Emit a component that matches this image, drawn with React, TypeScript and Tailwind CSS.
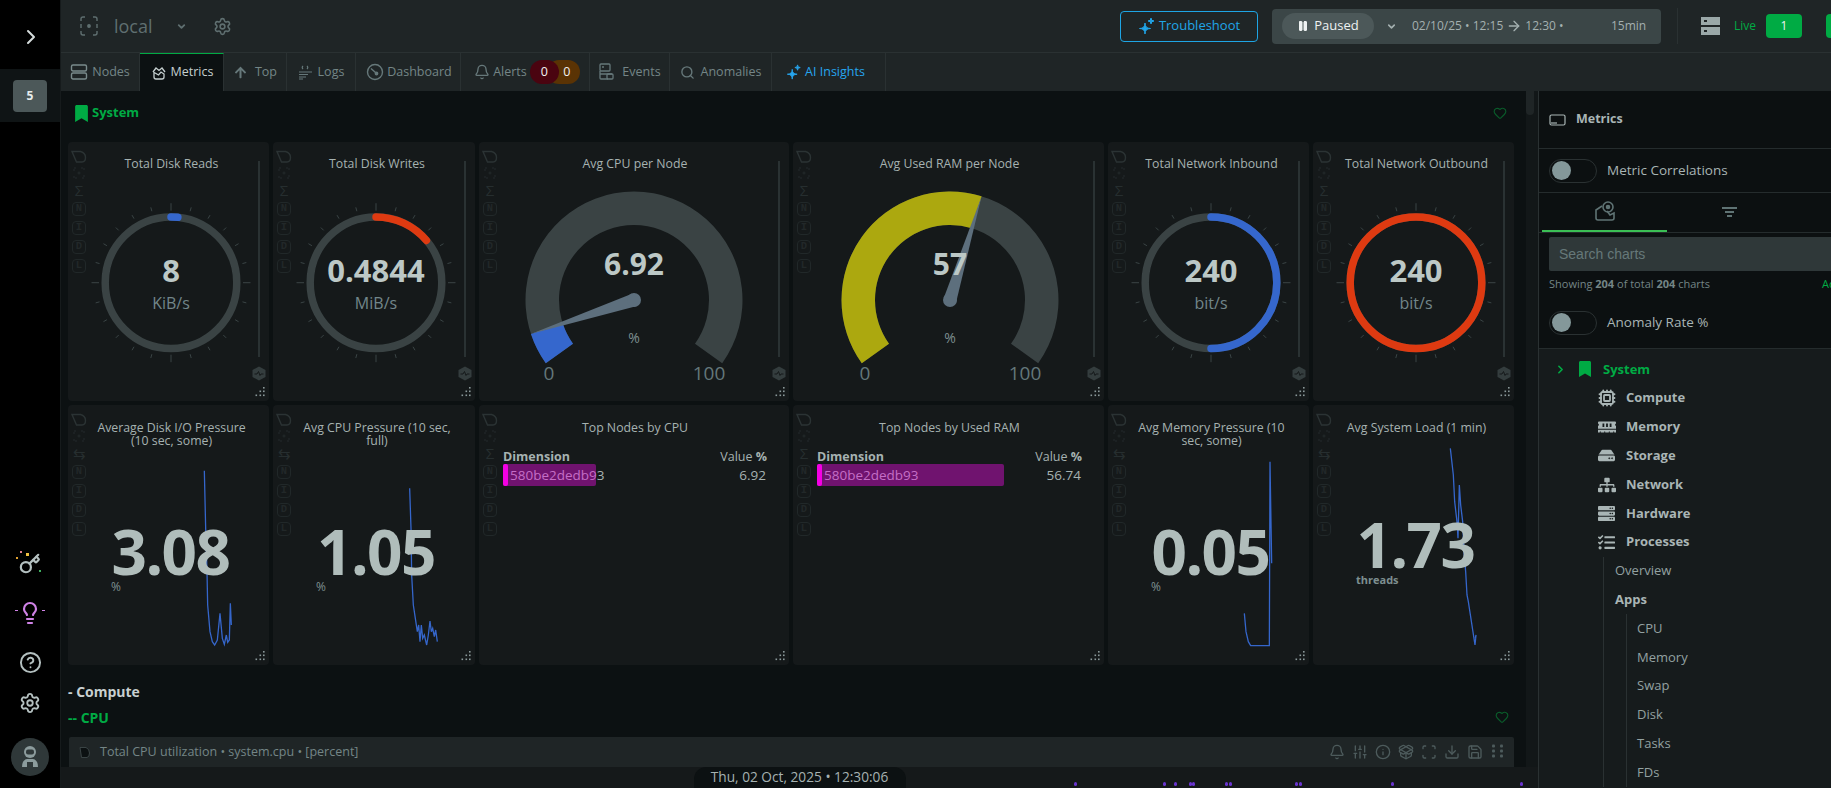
import React from "react";
import { Bell, Cpu, Info, Download, Save, SlidersVertical, PackageOpen, Scan, Lightbulb, CircleHelp, Settings, Key, ChevronRight, ChevronDown, Search, Heart, Pause, ArrowRight } from "lucide-react";
import { FaBookmark, FaMemory, FaHdd, FaSitemap, FaServer, FaTasks, FaArrowUp } from "react-icons/fa";

const FONT = "[font-family:'Open_Sans','Noto_Sans',sans-serif]";

const star = (x: number, y: number, r: number) =>
  `M${x} ${y - r}Q${x} ${y} ${x + r} ${y}Q${x} ${y} ${x} ${y + r}Q${x} ${y} ${x - r} ${y}Q${x} ${y} ${x} ${y - r}Z`;

function Sparkle({ size = 18, color = "#20a5e8" }: { size?: number; color?: string }) {
  return (
    <svg width={size} height={size} viewBox="0 0 18 18" fill={color} stroke={color} strokeWidth="1">
      <path d={star(7, 11.5, 5.5)} />
      <path d={star(13, 4, 3)} />
    </svg>
  );
}

const pt = (cx: number, cy: number, r: number, deg: number) => {
  const a = (deg * Math.PI) / 180;
  return [cx + r * Math.cos(a), cy + r * Math.sin(a)];
};

function sector(cx: number, cy: number, ro: number, ri: number, a0: number, a1: number) {
  const [x0, y0] = pt(cx, cy, ro, a0);
  const [x1, y1] = pt(cx, cy, ro, a1);
  const [x2, y2] = pt(cx, cy, ri, a1);
  const [x3, y3] = pt(cx, cy, ri, a0);
  const l = a1 - a0 > 180 ? 1 : 0;
  return `M${x0} ${y0}A${ro} ${ro} 0 ${l} 1 ${x1} ${y1}L${x2} ${y2}A${ri} ${ri} 0 ${l} 0 ${x3} ${y3}Z`;
}

function TagIcon() {
  return (
    <svg width="16" height="13" viewBox="0 0 16 13" fill="none" stroke="#2b3334" strokeWidth="1.4">
      <path d="M1 1.5H9.5Q14.5 3 14.5 7.5T11 12H5.5Z" />
    </svg>
  );
}

function ChipColumn({ glyph }: { glyph: "sigma" | "swap" }) {
  const box = "flex h-[14px] w-[14px] items-center justify-center rounded-[4px] border border-[#212829] text-[10.5px] font-bold text-[#222829] [font-family:'Liberation_Mono',monospace]";
  return (
    <div className="absolute left-[3px] top-[8px] flex flex-col items-center">
      <TagIcon />
      <svg className="mt-[4px]" width="12" height="12" viewBox="0 0 12 12" fill="none" stroke="#242b2c" strokeWidth="1">
        <path d="M1 4V1H4M8 1H11V4M11 8V11H8M4 11H1V8" strokeDasharray="2 1" />
        <circle cx="6" cy="6" r="1" />
      </svg>
      <div className="mt-[2px] flex h-[18px] items-center justify-center text-[15px] leading-none text-[#262e2f]">{glyph === "sigma" ? "Σ" : "⇆"}</div>
      <div className="mt-[3px] flex flex-col gap-[5px]">
        {["N", "I", "D", "L"].map((c) => (
          <div key={c} className={box}>{c}</div>
        ))}
      </div>
    </div>
  );
}

function ResizeDots() {
  return (
    <svg className="absolute bottom-[3px] right-[4px]" width="12" height="12" viewBox="0 0 12 12" fill="#8a9899">
      {[[10, 1], [10, 4.5], [6.5, 4.5], [10, 8.5], [6.5, 8.5], [2.5, 8.5]].map(([x, y], i) => (
        <rect key={i} x={x} y={y} width="1.6" height="1.6" />
      ))}
    </svg>
  );
}

function SideControls() {
  return (
    <>
      <div className="absolute bottom-[44px] right-[9px] top-[19px] w-[2px] bg-[#2a3233]" />
      <svg className="absolute bottom-[20px] right-[3px]" width="14" height="15" viewBox="0 0 14 15">
        <path d="M7 .5L13.5 4V11L7 14.5L.5 11V4Z" fill="#343d3e" />
        <path d="M2.5 8H5L6.5 5.5L8 9.5L9 8H11.5" fill="none" stroke="#15191a" strokeWidth="1" />
      </svg>
    </>
  );
}

function Card({ title, art, children, glyph = "sigma", lower = false, wide = false }: { title: string; art?: React.ReactNode; children?: React.ReactNode; glyph?: "sigma" | "swap"; lower?: boolean; wide?: boolean }) {
  return (
    <div className="relative overflow-hidden rounded-[4px] bg-[#15191a]">
      {art}
      <div className={`relative text-center text-[12.3px] leading-[13px] text-[#a6b2b1] ${lower ? "pt-[16px]" : "pt-[15px]"} ${wide ? "pl-[24px] pr-[22px]" : "pl-[26px] pr-[20px]"}`}>{title}</div>
      {children}
      <ChipColumn glyph={glyph} />
      <ResizeDots />
    </div>
  );
}

function Ring({ title, value, unit, sweep, color }: { title: string; value: string; unit: string; sweep: number; color: string }) {
  const cx = 103;
  const cy = 140.7;
  const r = 65.8;
  const ticks = Array.from({ length: 24 }, (_, i) => i * 15);
  const [ex, ey] = pt(cx, cy, r, -90 + sweep);
  const [sx, sy] = pt(cx, cy, r, -90);
  return (
    <Card
      title={title}
      art={
        <svg className="absolute inset-0" width="201" height="259">
          {ticks.map((d) => {
            const major = d % 90 === 0;
            const [x0, y0] = pt(cx, cy, major ? 72 : 74, d);
            const [x1, y1] = pt(cx, cy, major ? 79.5 : 78, d);
            return <line key={d} x1={x0} y1={y0} x2={x1} y2={y1} stroke="#3a4445" strokeWidth="1" />;
          })}
          <circle cx={cx} cy={cy} r={r} fill="none" stroke="#3a4344" strokeWidth="7.5" />
          {sweep >= 360 ? (
            <circle cx={cx} cy={cy} r={r} fill="none" stroke={color} strokeWidth="7.5" />
          ) : (
            <path d={`M${sx} ${sy}A${r} ${r} 0 ${sweep > 180 ? 1 : 0} 1 ${ex} ${ey}`} fill="none" stroke={color} strokeWidth="7.5" strokeLinecap="round" />
          )}
          <text x={cx} y={140} textAnchor="middle" fontSize="31" fontWeight="700" fill="#bcc8c6">{value}</text>
          <text x={cx} y={167} textAnchor="middle" fontSize="16" fill="#72868a">{unit}</text>
        </svg>
      }
    >
      <SideControls />
    </Card>
  );
}

function Dial({ title, value, pct, color, cx }: { title: string; value: string; pct: number; color: string; cx: number }) {
  const cy = 158;
  const s = 144.4;
  const e = 395.6;
  const a = s + ((e - s) * pct) / 100;
  const [tx, ty] = pt(cx, cy, 108, a);
  const [b0x, b0y] = pt(cx, cy, 6.5, a + 90);
  const [b1x, b1y] = pt(cx, cy, 6.5, a - 90);
  return (
    <Card
      title={title}
      wide
      art={
        <svg className="absolute inset-0" width="311" height="259">
          <path d={sector(cx, cy, 108.5, 75, s, e)} fill="#3a4344" />
          <path d={sector(cx, cy, 108.5, 75, s, a)} fill={color} />
          <polygon points={`${b0x},${b0y} ${b1x},${b1y} ${tx},${ty}`} fill="#5d6f7d" />
          <circle cx={cx} cy={cy} r="7" fill="#5d6f7d" />
          <text x={cx} y={133} textAnchor="middle" fontSize="30" fontWeight="700" fill="#bcc8c6">{value}</text>
          <text x={cx} y={201} textAnchor="middle" fontSize="14" fill="#7d8f90">%</text>
          <text x={cx - 85} y={238} textAnchor="middle" fontSize="19" fill="#64777a">0</text>
          <text x={cx + 75} y={238} textAnchor="middle" fontSize="19" fill="#64777a">100</text>
        </svg>
      }
    >
      <SideControls />
    </Card>
  );
}

function Big({ title, value, unit, line, lx, numY, unitY }: { title: string; value: string; unit: string; line: number[][]; lx: number; numY: number; unitY: number }) {
  const points = line.map(([x, y]) => `${(x - lx) / 3},${y / 3}`).join(" ");
  return (
    <Card
      title={title}
      glyph="swap"
      lower
      art={
        <svg className="absolute inset-0" width="201" height="260">
          <polyline points={points} fill="none" stroke="#3566cb" strokeWidth="1.3" />
        </svg>
      }
    >
      <div style={{ top: numY }} className="absolute left-0 right-0 pl-[4px] text-center text-[62px] font-bold leading-[52px] tracking-[-1.5px] text-[#b0bdbb]">{value}</div>
      <div style={{ top: unitY }} className={`absolute left-[43px] leading-[14px] text-[#7d8f90] ${unit === "threads" ? "text-[11px] font-bold" : "text-[12px]"}`}>{unit}</div>
    </Card>
  );
}

function TableCard({ title, value, barW }: { title: string; value: string; barW: string }) {
  return (
    <Card title={title} lower wide>
      <div className="pl-[24px] pr-[22px] pt-[15px]">
        <div className="flex items-center justify-between text-[12.5px] leading-[16px] text-[#a6b2b1]">
          <span className="font-bold">Dimension</span>
          <span>Value <b>%</b></span>
        </div>
        <div className="relative mt-[-1px] flex h-[22px] items-center justify-between text-[13.5px] text-[#a6b2b1]">
          <span className="pl-[7px]">580be2dedb93</span>
          <span className="pr-[1px]">{value}</span>
          <div className={`absolute bottom-0 left-0 top-0 rounded-[2px] bg-[rgba(240,11,231,.415)] ${barW}`}>
            <div className="h-full w-[5px] rounded-[2px] bg-[#f400e4]" />
          </div>
        </div>
      </div>
    </Card>
  );
}

function NodesIcon({ color = "#7a8b8c" }: { color?: string }) {
  return (
    <svg width="18" height="18" viewBox="0 0 18 18" fill="none" stroke={color} strokeWidth="1.4">
      <rect x="1.5" y="2" width="15" height="6" rx="1.5" />
      <rect x="1.5" y="10" width="15" height="6" rx="1.5" />
    </svg>
  );
}

function MetricsIcon() {
  return (
    <svg width="14" height="14" viewBox="0 0 14 14" fill="none" stroke="#c5cfcf" strokeWidth="1.3">
      <path d="M1 6L4 2L7 4.5L10 2L13 6" />
      <path d="M2 6.5V11Q2 13 4 13H10Q12 13 12 11V8L9 6L6.5 9L4 7.5Z" />
    </svg>
  );
}

function LogsIcon() {
  return (
    <svg width="15" height="15" viewBox="0 0 15 15" fill="none" stroke="#66787a" strokeWidth="1.2">
      <path d="M5 1Q3.5 2.5 5 4M9 1Q10.5 2.5 9 4M1 7H14M1 9.5H10M1 12H8M1 14H5" />
    </svg>
  );
}

function EventsIcon() {
  return (
    <svg width="15" height="18" viewBox="0 0 15 18" fill="none" stroke="#66787a" strokeWidth="1.3">
      <rect x="1" y="1" width="10" height="7" rx="1" />
      <path d="M3 4H5M1 8V15Q1 16 2 16H9M1 11H13" />
      <rect x="8" y="11" width="6" height="5" rx="1" />
    </svg>
  );
}

function DashIcon() {
  return (
    <svg width="18" height="18" viewBox="0 0 18 18" fill="none" stroke="#66787a" strokeWidth="1.4">
      <circle cx="9" cy="9" r="7.5" />
      <path d="M5 5.5L10 10" />
      <circle cx="10.5" cy="10.5" r="1.2" fill="#66787a" />
    </svg>
  );
}

const tabs: { label: string; icon: React.ReactNode; w: string; color: string; active?: boolean; gap?: string }[] = [
  { label: "Nodes", icon: <NodesIcon />, w: "w-[79px]", color: "text-[#748586]", gap: "gap-[4px]" },
  { label: "Metrics", icon: <MetricsIcon />, w: "w-[84px]", color: "pl-[2px] text-[#c5cfcf]", active: true },
  { label: "Top", icon: <FaArrowUp size={13} color="#66787a" />, w: "w-[63px]", color: "pl-[1px] text-[#748586]", gap: "gap-[8px]" },
  { label: "Logs", icon: <LogsIcon />, w: "w-[69px]", color: "text-[#748586]" },
  { label: "Dashboard", icon: <DashIcon />, w: "w-[105px]", color: "pl-[2px] text-[#748586]", gap: "gap-[3px]" },
  { label: "Alerts", icon: <Bell size={16} color="#66787a" />, w: "w-[129px]", color: "pl-[4px] text-[#748586]", gap: "gap-[3px]" },
  { label: "Events", icon: <EventsIcon />, w: "w-[80px]", color: "pl-[1px] text-[#748586]", gap: "gap-[8px]" },
  { label: "Anomalies", icon: <Search size={15} color="#66787a" strokeWidth={2.2} />, w: "w-[102px]", color: "text-[#748586]", gap: "gap-[6px]" },
  { label: "AI Insights", icon: <Sparkle size={16} color="#26a6ef" />, w: "w-[114px]", color: "pr-[6px] text-[#26a6ef]", gap: "gap-[3px]" },
];

function Toggle() {
  return (
    <div className="flex h-[24px] w-[48px] items-center rounded-full border border-[#2a3132] pl-[2px]">
      <div className="h-[19px] w-[19px] rounded-full bg-[#84989a]" />
    </div>
  );
}

function Group({ icon, label }: { icon: React.ReactNode; label: string }) {
  return (
    <div className="flex h-[28.8px] items-center pl-[59px]">
      <div className="flex w-[28px] shrink-0 items-center">{icon}</div>
      <span className="text-[13px] font-bold text-[#a9b5b5]">{label}</span>
    </div>
  );
}

const dots = [1074, 1163, 1174, 1189, 1192, 1225, 1229, 1295, 1299, 1391, 1520];

export default function App() {
  return (
    <div className={`flex h-[788px] w-[1831px] overflow-hidden bg-[#0c1112] ${FONT}`}>
      <aside className="flex h-full w-[61px] shrink-0 flex-col border-r border-[#161b1c] bg-black">
        <div className="flex h-[69px] items-center justify-center pt-[4px]">
          <ChevronRight size={24} color="#d5dcdc" strokeWidth={2} className="ml-[2px]" />
        </div>
        <div className="flex h-[53px] items-center justify-center bg-[#0f1415]">
          <div className="flex h-[32px] w-[34px] items-center justify-center rounded-[4px] bg-[#4c5859] text-[12px] font-bold text-[#e6ecec]">5</div>
        </div>
        <div className="flex flex-1 flex-col items-center justify-end pb-[12px]">
          <div className="relative mb-[1px]">
            <Key size={22} color="#b4c0c0" strokeWidth={2.4} />
            <div className="absolute left-[-3px] top-[4px] h-[2px] w-[2px] bg-[#e0a030]" />
            <div className="absolute left-[7px] top-[0px] h-[3px] w-[3px] bg-[#f0c040]" />
            <div className="absolute left-[1px] top-[-2px] h-[2px] w-[2px] bg-[#e08090]" />
            <div className="absolute right-[0px] bottom-[3px] h-[2px] w-[2px] bg-[#40b060]" />
          </div>
          <div className="relative mt-[25px] flex items-center justify-center">
            <Lightbulb size={24} color="#cf82e6" strokeWidth={2.2} />
            <div className="absolute left-[-3px] top-[9px] h-[1px] w-[3px] bg-[#cf82e6]" />
            <div className="absolute right-[-3px] top-[9px] h-[1px] w-[3px] bg-[#cf82e6]" />
          </div>
          <CircleHelp size={23} color="#b4c0c0" className="mt-[26px]" />
          <Settings size={22} color="#b4c0c0" className="mt-[18px]" />
          <div className="mt-[24px] flex h-[38px] w-[38px] items-center justify-center rounded-full bg-[#2f3839]">
            <svg width="22" height="24" viewBox="0 0 22 24" fill="#8c9c9d">
              <circle cx="11" cy="7" r="6" />
              <rect x="7" y="4.5" width="8" height="5" rx="2" fill="#2f3839" />
              <path d="M3 22Q3 15 8 14H14Q19 15 19 22Z" />
              <rect x="8" y="17" width="6" height="5" fill="#2f3839" />
            </svg>
          </div>
        </div>
      </aside>

      <div className="flex min-w-0 flex-1 flex-col">
        <header className="flex h-[53px] shrink-0 items-center overflow-hidden border-b border-[#2a3132] bg-[#1f2526]">
          <div className="flex w-[1059px] shrink-0 items-center pl-[19px]">
            <svg width="18" height="20" viewBox="0 0 18 20" fill="none" stroke="#5f6f70" strokeWidth="1.4">
              <path d="M5 1H3Q1 1 1 3V5M1 8V12M1 15V17Q1 19 3 19H5M13 1H15Q17 1 17 3V5M17 8V12M17 15V17Q17 19 15 19H13" />
              <circle cx="9" cy="10" r="1.2" fill="#5f6f70" />
            </svg>
            <span className="ml-[16px] text-[18px] text-[#5f6f70]">local</span>
            <ChevronDown size={11} color="#5f6f70" strokeWidth={4} className="ml-[23px]" />
            <Settings size={19} color="#5f6f70" className="ml-[26px]" />
          </div>
          <div className="flex h-[31px] w-[138px] shrink-0 items-center justify-center gap-[3px] rounded-[4px] border border-[#1ea5e4] text-[13px] text-[#20a5e8]">
            <Sparkle size={18} />
            <span>Troubleshoot</span>
          </div>
          <div className="ml-[14px] flex h-[35px] w-[389px] shrink-0 items-center rounded-[4px] bg-[#3b4647] pl-[10px] text-[12px] text-[#a4b0b0]">
            <div className="flex h-[26px] w-[92px] items-center justify-center gap-[5px] rounded-full bg-[#4c5859] text-[13px] text-[#eef2f2]">
              <Pause size={12} fill="#eef2f2" color="#eef2f2" />
              Paused
            </div>
            <ChevronDown size={11} color="#a4b0b0" strokeWidth={3.5} className="ml-[12px]" />
            <div className="ml-[15px] flex w-[166px] items-center gap-[3px] whitespace-nowrap">
              02/10/25 • 12:15 <ArrowRight size={16} /> 12:30 •
            </div>
            <span className="ml-[33px]">15min</span>
          </div>
          <div className="ml-[16px] h-[36px] w-px shrink-0 bg-[#2a3132]" />
          <svg className="ml-[23px] shrink-0" width="19" height="19" viewBox="0 0 19 19" fill="#9aa8a8">
            <path fillRule="evenodd" d="M0 0H19V8H0ZM3 3V5H6V3Z" />
            <path fillRule="evenodd" d="M0 10H19V18H0ZM3 13V15H6V13Z" />
          </svg>
          <span className="ml-[14px] text-[12px] text-[#00ab44]">Live</span>
          <div className="ml-[10px] flex h-[24px] w-[36px] shrink-0 items-center justify-center rounded-[4px] bg-[#00ab44] text-[12px] text-[#eef2f2]">1</div>
          <div className="ml-[24px] h-[24px] w-[36px] shrink-0 rounded-[4px] bg-[#00ab44]" />
        </header>

        <nav className="flex h-[38px] shrink-0 items-stretch bg-[#1f2526] text-[12.5px]">
          {tabs.map((t) => (
            <div
              key={t.label}
              className={`flex items-center justify-center border-r border-[#2a3132] ${t.gap ?? "gap-[5px]"} ${t.w} ${t.color} ${t.active ? "border-t border-t-[#00ab44] bg-[#0c1112]" : ""}`}
            >
              {t.icon}
              <span>{t.label}</span>
              {t.label === "Alerts" && (
                <div className="flex h-[24px] items-center">
                  <div className="z-10 flex h-[24px] w-[29px] items-center justify-center rounded-full bg-[#4a0410] text-[#f2f2f2]">0</div>
                  <div className="ml-[-12px] flex h-[24px] w-[33px] items-center justify-center rounded-full bg-[#5a3304] pl-[7px] text-[#f2f2f2]">0</div>
                </div>
              )}
            </div>
          ))}
        </nav>

        <div className="flex min-h-0 flex-1">
          <div className="flex min-w-0 flex-1 flex-col">
            <div className="flex min-h-0 flex-1">
              <main className="min-w-0 flex-1 overflow-hidden pl-[7px]">
                <div className="flex h-[44px] w-[1446px] items-center justify-between pl-[5px] pr-[7px]">
                  <div className="flex items-center gap-[2px] text-[13px] font-bold text-[#00ab44]">
                    <FaBookmark size={17} />
                    System
                  </div>
                  <Heart size={14} color="#0a5a2a" />
                </div>
                <div className="mt-[7px] grid w-[1446px] grid-cols-[201px_202px_310px_311px_201px_201px] grid-rows-[259px_260px] gap-x-[4px] gap-y-[4px]">
                  <Ring title="Total Disk Reads" value="8" unit="KiB/s" sweep={6} color="#3567cd" />
                  <Ring title="Total Disk Writes" value="0.4844" unit="MiB/s" sweep={50} color="#de3a11" />
                  <Dial title="Avg CPU per Node" value="6.92" pct={6.92} color="#3567cd" cx={155} />
                  <Dial title="Avg Used RAM per Node" value="57" pct={56.74} color="#aca80f" cx={157} />
                  <Ring title="Total Network Inbound" value="240" unit="bit/s" sweep={180} color="#3567cd" />
                  <Ring title="Total Network Outbound" value="240" unit="bit/s" sweep={360} color="#de3a11" />

                  <Big
                    title="Average Disk I/O Pressure (10 sec, some)"
                    value="3.08"
                    unit="%"
                    lx={24}
                    numY={120}
                    unitY={175}
                    line={[[433,197],[437,370],[441,500],[443,600],[450,680],[457,710],[464,720],[472,705],[480,625],[487,700],[493,718],[499,690],[503,712],[508,705],[511,595],[514,660]]}
                  />
                  <Big
                    title="Avg CPU Pressure (10 sec, full)"
                    value="1.05"
                    unit="%"
                    lx={639}
                    numY={120}
                    unitY={175}
                    line={[[1049,250],[1053,370],[1055,510],[1060,600],[1066,640],[1072,680],[1076,660],[1080,710],[1084,660],[1088,700],[1093,690],[1100,720],[1105,690],[1110,648],[1114,680],[1118,670],[1123,695],[1127,675],[1132,710]]}
                  />
                  <TableCard title="Top Nodes by CPU" value="6.92" barW="w-[93px]" />
                  <TableCard title="Top Nodes by Used RAM" value="56.74" barW="w-[187px]" />
                  <Big
                    title="Avg Memory Pressure (10 sec, some)"
                    value="0.05"
                    unit="%"
                    lx={24}
                    numY={120}
                    unitY={175}
                    line={[[433,625],[438,680],[445,710],[452,722],[508,722],[510,170],[515,475]]}
                  />
                  <Big
                    title="Avg System Load (1 min)"
                    value="1.73"
                    unit="threads"
                    lx={639}
                    numY={113}
                    unitY={168}
                    line={[[1051,130],[1060,210],[1064,290],[1071,350],[1074,400],[1078,240],[1082,300],[1088,350],[1092,440],[1097,500],[1101,570],[1105,590],[1125,720],[1128,690],[1126,700]]}
                  />
                </div>
                <div className="mt-[17px] h-[20px] text-[14px] font-bold leading-[20px] text-[#c8d0d0]">- Compute</div>
                <div className="mt-[5px] flex h-[20px] w-[1441px] items-center justify-between text-[14px] font-bold text-[#00ab44]">
                  <span>-- CPU</span>
                  <Heart size={14} color="#0a5a2a" />
                </div>
                <div className="ml-[1px] mt-[10px] flex h-[30px] w-[1445px] items-center rounded-t-[2px] bg-[#1f2526] pl-[9px] pr-[10px] text-[12.5px] text-[#748586]">
                  <svg width="13" height="13" viewBox="0 0 13 13" fill="#0c1112" stroke="#3a4445"><path d="M2 1.5H8Q11.5 3 11.5 7T9 11.5H3.5Z" /></svg>
                  <span className="ml-[9px]">Total CPU utilization • system.cpu • [percent]</span>
                  <div className="ml-auto flex items-center gap-[7px] text-[#4d5b5c]">
                    <Bell size={16} />
                    <SlidersVertical size={16} />
                    <Info size={16} />
                    <PackageOpen size={16} />
                    <Scan size={16} />
                    <Download size={16} />
                    <Save size={16} />
                    <svg width="14" height="16" viewBox="0 0 14 16" fill="currentColor">
                      {[2, 7, 12].flatMap((y) => [2, 10].map((x) => <rect key={`${x}-${y}`} x={x} y={y - 1.5} width="3" height="3" rx="1" />))}
                    </svg>
                  </div>
                </div>
              </main>
              <div className="w-[12px] shrink-0 bg-[#121718]">
                <div className="h-[24px] w-[8px] rounded-b-[4px] bg-[#1f2526]" />
              </div>
            </div>
            <footer className="relative flex h-[21px] shrink-0 justify-center bg-[#15191a]">
              <div className="flex h-full w-[212px] items-center justify-center rounded-t-[12px] bg-[#0c1112] text-[13.7px] text-[#a6b2b1]">
                Thu, 02 Oct, 2025 • 12:30:06
              </div>
              {dots.map((x) => (
                <div key={x} style={{ left: x - 61 }} className="absolute top-[15px] h-[4px] w-[3px] rounded-full bg-[#6a35d0]" />
              ))}
            </footer>
          </div>

          <aside className="h-full w-[293px] shrink-0 overflow-hidden border-l border-[#2a3132] text-[#a9b5b5]">
            <div className="w-[340px] bg-[#0c1011]">
              <div className="flex h-[58px] items-center border-b border-[#252c2d] pl-[10px] text-[12.5px] font-bold">
                <svg width="17" height="12" viewBox="0 0 17 12" fill="none" stroke="#a9b5b5" strokeWidth="1.2"><rect x="1" y="1" width="15" height="10" rx="1.5" /><path d="M2 9H8" /></svg>
                <span className="ml-[10px]">Metrics</span>
              </div>
              <div className="flex h-[44px] items-center border-b border-[#252c2d] pl-[10px] text-[13.5px]">
                <Toggle />
                <span className="ml-[10px]">Metric Correlations</span>
              </div>
              <div className="flex h-[40px] border-b border-[#252c2d] pl-[3px]">
                <div className="flex w-[125px] items-center justify-center border-b-2 border-[#3bbf55] pb-[1px]">
                  <svg width="20" height="20" viewBox="0 0 20 20" fill="none" stroke="#5f7374" strokeWidth="1.6">
                    <path d="M7 5L1 9V17Q1 19 3 19H17Q19 19 19 17V12L15 14L12 10" />
                    <circle cx="13" cy="6" r="5" />
                    <circle cx="13" cy="6" r="1.5" fill="#5f7374" />
                  </svg>
                </div>
                <div className="flex w-[125px] items-center justify-center">
                  <svg width="15" height="11" viewBox="0 0 15 11" fill="#5f7374"><rect width="15" height="2" /><rect x="3" y="4" width="9" height="2" /><rect x="5" y="8" width="5" height="2" /></svg>
                </div>
              </div>
              <div className="pl-[10px] pt-[4px]">
                <div className="flex h-[34px] items-center rounded-[2px] bg-[#2f3839] pl-[10px] text-[14px] text-[#667879] [font-family:'Liberation_Sans',sans-serif]">Search charts</div>
                <div className="flex h-[26px] items-center text-[11px] text-[#748586]">
                  <span className="w-[273px]">Showing <b>204</b> of total <b>204</b> charts</span>
                  <span className="text-[#00ab44]">Advanced</span>
                </div>
              </div>
              <div className="flex h-[52px] items-center border-b border-[#252c2d] pl-[10px] text-[13.5px]">
                <Toggle />
                <span className="ml-[10px]">Anomaly Rate %</span>
              </div>
            </div>
            <div className="relative h-full bg-[#161b1c] pt-[6px]">
              <div className="flex h-[28.8px] items-center pl-[15px] text-[13px] font-bold text-[#00ab44]">
                <ChevronRight size={13} strokeWidth={3} />
                <FaBookmark size={16} className="ml-[10px]" />
                <span className="ml-[10px]">System</span>
              </div>
              <Group icon={<Cpu size={18} strokeWidth={2.4} color="#a9b5b5" />} label="Compute" />
              <Group icon={<FaMemory size={18} />} label="Memory" />
              <Group icon={<FaHdd size={17} />} label="Storage" />
              <Group icon={<FaSitemap size={18} />} label="Network" />
              <Group icon={<FaServer size={17} />} label="Hardware" />
              <Group icon={<FaTasks size={17} />} label="Processes" />
              <div className="ml-[64px] border-l border-[#2a3132] pl-[11px] text-[13px] text-[#93a1a1]">
                <div className="flex h-[28.8px] items-center">Overview</div>
                <div className="flex h-[28.8px] items-center font-bold text-[#a9b5b5]">Apps</div>
                <div className="ml-[11px] border-l border-[#2a3132] pl-[10px]">
                  {["CPU", "Memory", "Swap", "Disk", "Tasks", "FDs"].map((s) => (
                    <div key={s} className="flex h-[28.8px] items-center">{s}</div>
                  ))}
                </div>
              </div>
            </div>
          </aside>
        </div>
      </div>
    </div>
  );
}
